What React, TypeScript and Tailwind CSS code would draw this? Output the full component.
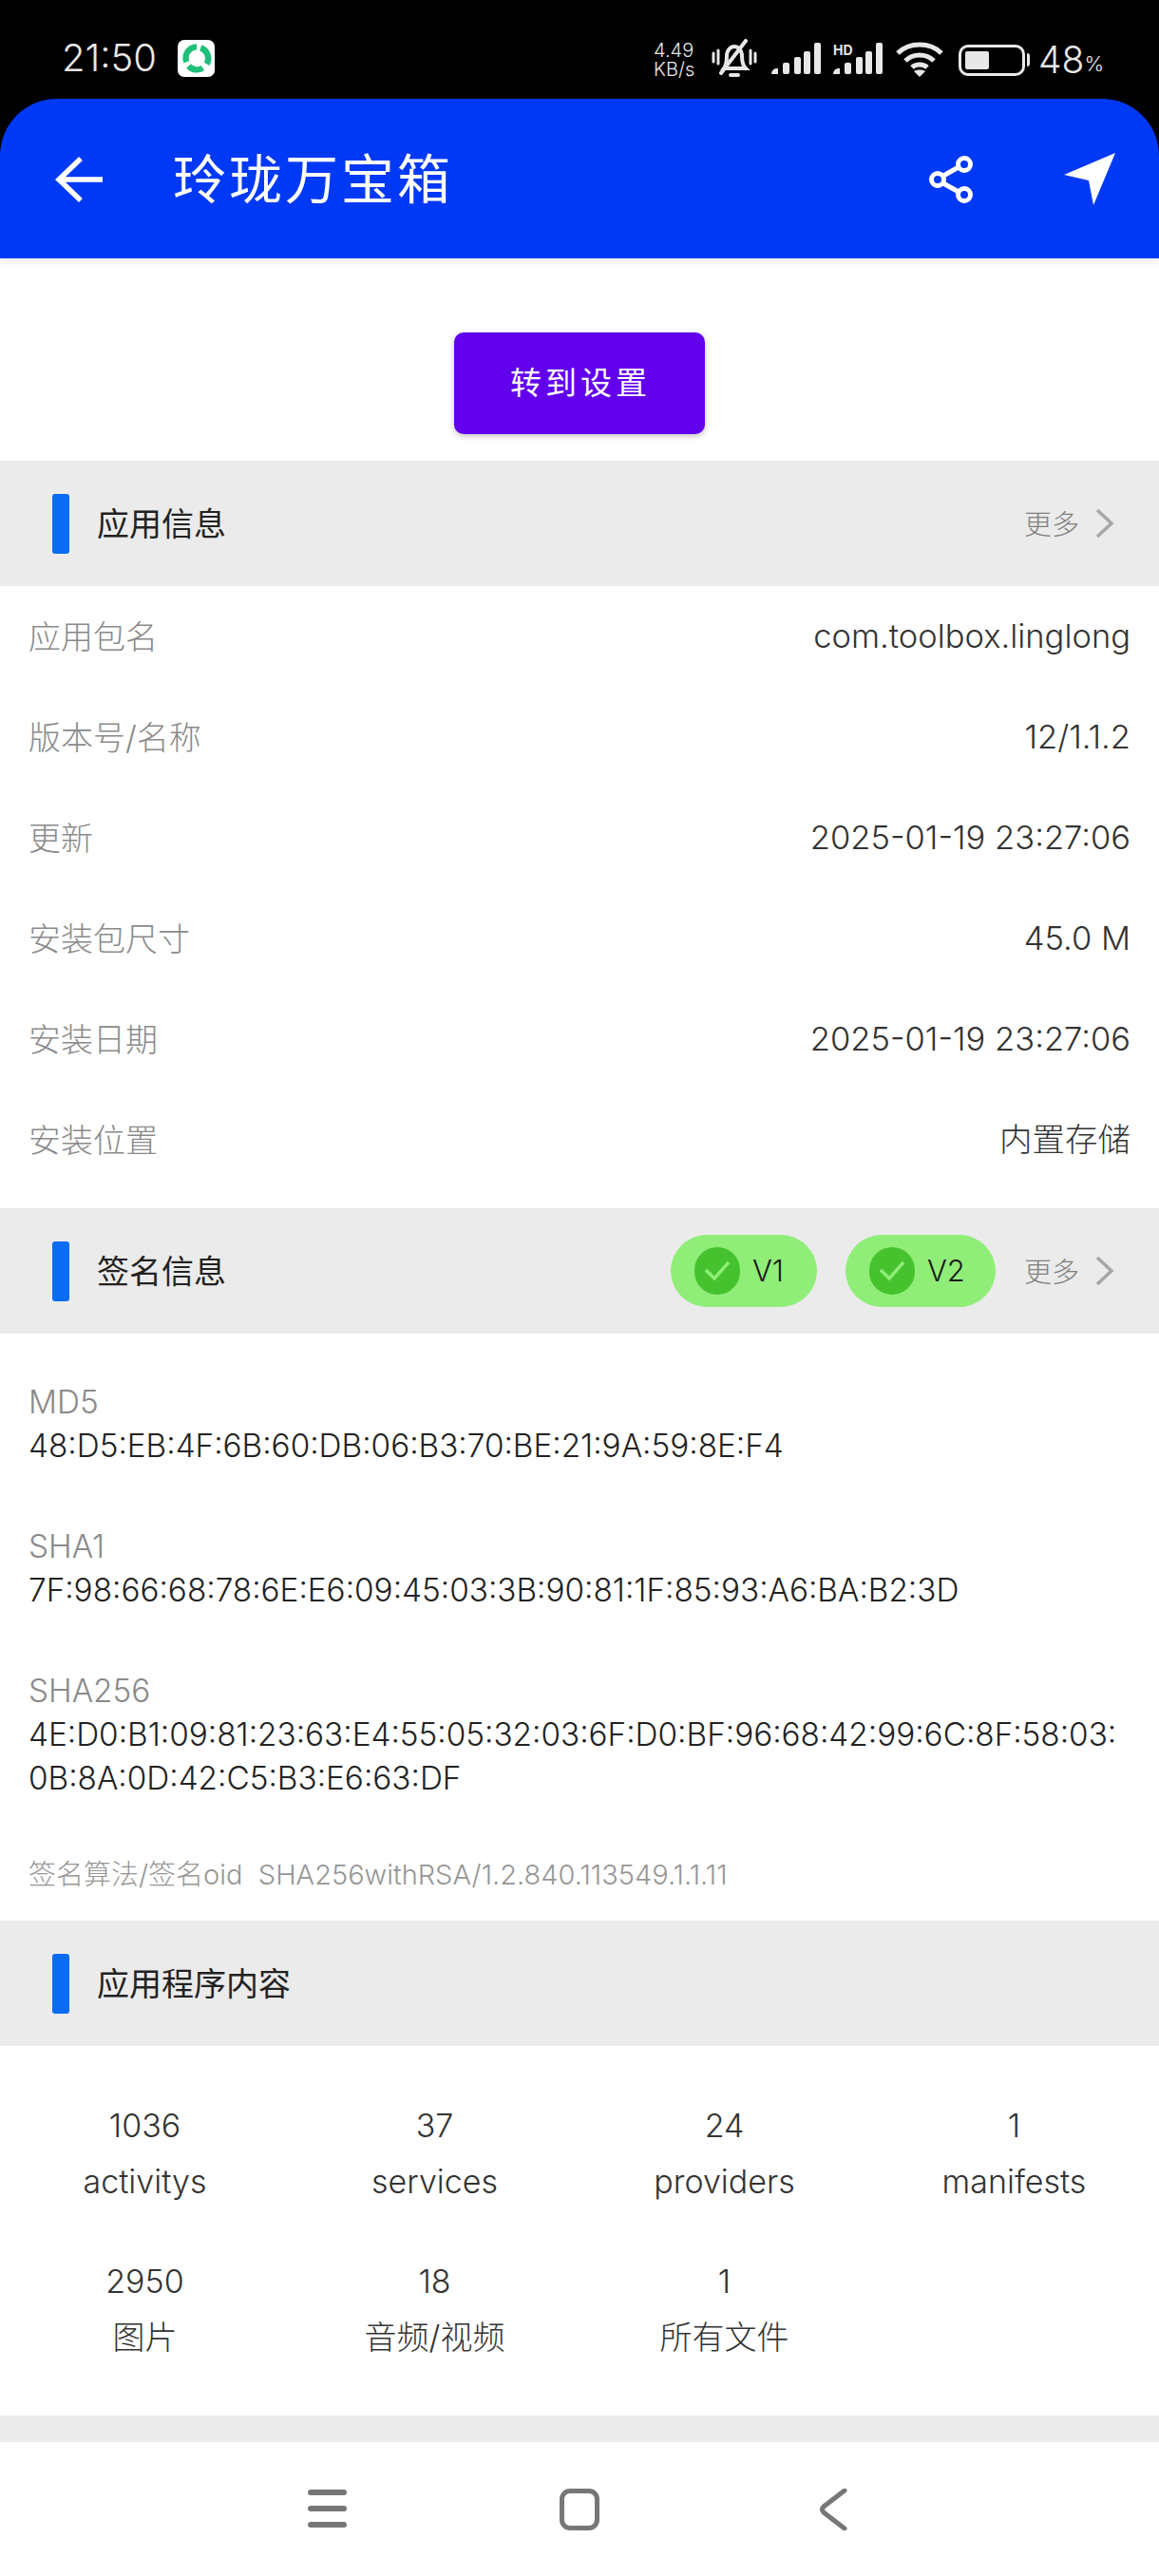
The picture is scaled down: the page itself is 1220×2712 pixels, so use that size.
const FONT = "font-['Inter','Noto_Sans_CJK_SC',sans-serif]";

const APP_INFO = [
  ["应用包名", "com.toolbox.linglong"],
  ["版本号/名称", "12/1.1.2"],
  ["更新", "2025-01-19 23:27:06"],
  ["安装包尺寸", "45.0 M"],
  ["安装日期", "2025-01-19 23:27:06"],
  ["安装位置", "内置存储"],
];

const SIGNATURES = [
  { label: "MD5", lines: ["48:D5:EB:4F:6B:60:DB:06:B3:70:BE:21:9A:59:8E:F4"] },
  { label: "SHA1", lines: ["7F:98:66:68:78:6E:E6:09:45:03:3B:90:81:1F:85:93:A6:BA:B2:3D"] },
  {
    label: "SHA256",
    lines: [
      "4E:D0:B1:09:81:23:63:E4:55:05:32:03:6F:D0:BF:96:68:42:99:6C:8F:58:03:",
      "0B:8A:0D:42:C5:B3:E6:63:DF",
    ],
  },
];

const CONTENTS = [
  ["1036", "activitys"],
  ["37", "services"],
  ["24", "providers"],
  ["1", "manifests"],
  ["2950", "图片"],
  ["18", "音频/视频"],
  ["1", "所有文件"],
];

function Signal({ hd }: { hd?: boolean }) {
  return (
    <svg width="52" height="36" viewBox="0 0 52 36" className="shrink-0">
      {hd && (
        <text x="0" y="13" fontSize="14" fontWeight="700" fill="#e8e8e8" fontFamily="Inter, sans-serif">
          HD
        </text>
      )}
      <path d="M0 33 a6 6 0 0 1 7-6 v6z" fill="#e8e8e8" />
      <rect x="12" y="21" width="7" height="12" rx="2" fill="#e8e8e8" />
      <rect x="24" y="15" width="7" height="18" rx="2" fill="#e8e8e8" />
      <rect x="34" y="9" width="7" height="24" rx="2" fill="#e8e8e8" />
      <rect x="45" y="0" width="7" height="33" rx="2" fill="#e8e8e8" />
    </svg>
  );
}

function StatusBar() {
  return (
    <div className="flex h-[104px] items-start justify-between bg-black pt-[41px] pr-[58px] pl-[65px] text-[#e8e8e8]">
      <div className="flex items-center gap-[22px]">
        <span className="text-[40px] leading-[40px] font-light">21:50</span>
        <div className="flex h-[39px] w-[39px] items-center justify-center rounded-[7px] bg-white">
          <svg width="34" height="34" viewBox="0 0 32 32" fill="none" stroke="#1fbf7a" strokeWidth="6">
            <path d="M6 20 A11 11 0 0 1 16 5" />
            <path d="M20 6 A11 11 0 0 1 26 22" />
            <path d="M22 26 A11 11 0 0 1 8 24" />
          </svg>
        </div>
      </div>
      <div className="flex items-center">
        <div className="mr-[17px] flex w-[44px] flex-col text-[20px] leading-[20px] font-light whitespace-nowrap">
          <span>4.49</span>
          <span>KB/s</span>
        </div>
        <svg width="48" height="44" viewBox="0 0 48 44" fill="none" stroke="#e8e8e8" strokeWidth="4" strokeLinecap="round" className="mr-[15px] shrink-0">
          <path d="M2 15v9M7 12v14M41 12v14M46 15v9" strokeWidth="3" />
          <path d="M13 31c3-4 3-8 3-13 0-6 4-10 8-10s8 4 8 10c0 5 1 10 4 13z" />
          <path d="M20 38h8" />
          <path d="M36 2 L10 36" />
        </svg>
        <div className="mr-[13px]">
          <Signal />
        </div>
        <div className="mr-[13px]">
          <Signal hd />
        </div>
        <svg width="52" height="40" viewBox="0 0 52 40" fill="none" stroke="#e8e8e8" strokeWidth="5" className="mr-[15px] shrink-0">
          <path d="M3 13 C15 1 37 1 49 13" />
          <path d="M11 21 C19 13 33 13 41 21" />
          <path d="M18 28 C22 24 30 24 34 28" />
          <path d="M26 38 L20 32 C23 30 29 30 32 32z" fill="#e8e8e8" stroke="none" />
        </svg>
        <div className="flex h-[33px] w-[70px] items-center rounded-[10px] border-[3px] border-[#e8e8e8] p-[4px]">
          <div className="h-full w-[25px] rounded-[2px] bg-[#e8e8e8]" />
        </div>
        <div className="mr-[9px] ml-[2px] h-[14px] w-[3px] rounded-r bg-[#e8e8e8]" />
        <span className="text-[39px] leading-[40px] font-light">48</span>
        <span className="mt-[8px] text-[22px] leading-[30px] font-light">%</span>
      </div>
    </div>
  );
}

function Header() {
  return (
    <div className="bg-black">
      <div className="flex h-[168px] items-center rounded-t-[60px] bg-[#0039f5] pt-[2px] shadow-[0_3px_8px_rgba(0,0,0,0.1)]">
        <svg width="52" height="50" viewBox="0 0 52 50" fill="none" stroke="white" strokeWidth="5.5" className="ml-[58px] shrink-0">
          <path d="M4 25 H50" />
          <path d="M27 3 L4 25 L27 47" />
        </svg>
        <h1 className="ml-[72px] text-[56px] leading-[64px] font-normal tracking-[3px] text-white">玲珑万宝箱</h1>
        <svg width="48" height="52" viewBox="0 0 48 52" fill="none" stroke="white" strokeWidth="5" className="ml-auto shrink-0">
          <circle cx="37" cy="10" r="6.5" />
          <circle cx="9" cy="26" r="6.5" />
          <circle cx="37" cy="42" r="6.5" />
          <path d="M15 22 L31 13 M15 30 L31 39" />
        </svg>
        <svg width="54" height="56" viewBox="0 0 54 56" fill="white" className="mr-[46px] ml-[94px] shrink-0">
          <path d="M54 0 L0 23 L26 29 L31 55z" />
        </svg>
      </div>
    </div>
  );
}

function More() {
  return (
    <div className="flex items-center">
      <span className="pt-[3px] text-[29px] leading-[34px] font-light text-[#808080]">更多</span>
      <svg width="20" height="32" viewBox="0 0 20 32" fill="none" stroke="#a6a6a6" strokeWidth="3.5" className="ml-[17px]">
        <path d="M2 2 L17 16 L2 30" />
      </svg>
    </div>
  );
}

function Chip({ label, width }: { label: string; width: string }) {
  return (
    <div className={`flex h-[76px] items-center rounded-full bg-[#90ee78] pl-[25px] ${width}`}>
      <div className="flex h-[50px] w-[48px] items-center justify-center rounded-full bg-[#46c22f]">
        <svg width="28" height="22" viewBox="0 0 28 22" fill="none" stroke="#90ee78" strokeWidth="3.5">
          <path d="M2 10 L11 19 L26 2" />
        </svg>
      </div>
      <span className="ml-[13px] text-[31px] leading-[36px] font-light text-[#1a1a1a]">{label}</span>
    </div>
  );
}

function SectionBar({ title, children }: { title: string; children?: React.ReactNode }) {
  return (
    <div className="flex h-[132px] items-center bg-[#ebebeb] pr-[47px] pl-[55px]">
      <div className="h-[63px] w-[18px] rounded-[3px] bg-[#0a6cf0]" />
      <span className="ml-[29px] pt-[2px] text-[34px] leading-[40px] text-[#222222]">{title}</span>
      {children && <div className="ml-auto flex items-center">{children}</div>}
    </div>
  );
}

function Count({ value, label }: { value: string; label: string }) {
  return (
    <div className="flex flex-col items-center text-[34px] leading-[59px] font-light text-[#333333]">
      <span>{value}</span>
      <span>{label}</span>
    </div>
  );
}

function NavBar() {
  return (
    <div className="flex h-[142px] items-start bg-white pt-[49px]">
      <div className="ml-[324px] flex h-[41px] w-[41px] flex-col justify-between pt-[1px]">
        <div className="h-[6px] rounded-full bg-[#777777]" />
        <div className="h-[6px] rounded-full bg-[#777777]" />
        <div className="h-[6px] rounded-full bg-[#777777]" />
      </div>
      <div className="ml-[224px] h-[44px] w-[42px] rounded-[11px] border-[5px] border-[#777777]" />
      <svg width="30" height="44" viewBox="0 0 30 44" fill="none" stroke="#777777" strokeWidth="5" strokeLinecap="round" className="ml-[231px]">
        <path d="M27 2 L5 19 Q2 22 5 25 L27 42" />
      </svg>
    </div>
  );
}

export default function App() {
  return (
    <div className={`h-[2712px] w-[1220px] overflow-hidden bg-white ${FONT}`}>
      <StatusBar />
      <Header />

      <div className="flex justify-center pt-[78px] pb-[28px]">
        <button className="h-[107px] w-[264px] rounded-[10px] bg-[#6200ee] pl-[2px] text-[33px] tracking-[4px] text-white shadow-[0_2px_6px_rgba(0,0,0,0.25)]">
          转到设置
        </button>
      </div>

      <SectionBar title="应用信息">
        <More />
      </SectionBar>
      <div className="pb-[19px]">
        {APP_INFO.map(([name, value]) => (
          <div key={name} className="flex h-[106px] items-center justify-between pr-[30px] pl-[30px] text-[34.5px] font-light">
            <span className="text-[34px] text-[#8a8a8a]">{name}</span>
            <span className="text-[#333333]">{value}</span>
          </div>
        ))}
      </div>

      <SectionBar title="签名信息">
        <Chip label="V1" width="w-[154px]" />
        <div className="ml-[30px]">
          <Chip label="V2" width="w-[158px]" />
        </div>
        <div className="ml-[30px]">
          <More />
        </div>
      </SectionBar>
      <div className="flex flex-col gap-[60px] px-[30px] pt-[49px] text-[33.3px] leading-[46px] font-light">
        {SIGNATURES.map((sig) => (
          <div key={sig.label}>
            <div className="text-[#8a8a8a]">{sig.label}</div>
            {sig.lines.map((line) => (
              <div key={line} className="whitespace-nowrap text-[#222222]">
                {line}
              </div>
            ))}
          </div>
        ))}
      </div>
      <div className="px-[30px] pt-[59px] pb-[28px] text-[29px] leading-[40px] font-light text-[#969696]">
        签名算法/签名oid&nbsp;&nbsp;SHA256withRSA/1.2.840.113549.1.1.11
      </div>

      <SectionBar title="应用程序内容" />
      <div className="grid grid-cols-4 gap-y-[46px] pt-[54px] pb-[53px]">
        {CONTENTS.map(([value, label]) => (
          <Count key={label} value={value} label={label} />
        ))}
      </div>

      <div className="h-[28px] bg-[#ebebeb]" />
      <NavBar />
    </div>
  );
}
